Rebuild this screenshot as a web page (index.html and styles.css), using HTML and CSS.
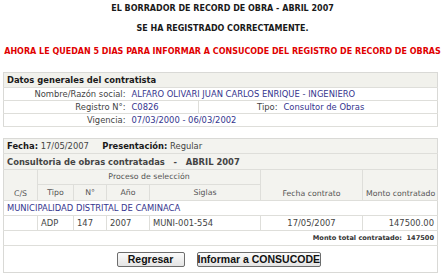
FILE: index.html
```html
<!DOCTYPE html>
<html lang="es">
<head>
<meta charset="utf-8">
<title>Record de obra</title>
<link rel="stylesheet" href="styles.css">
</head>
<body>
<div class="page">
  <p class="ttl">EL BORRADOR DE RECORD DE OBRA - ABRIL 2007</p>
  <p class="ttl t2">SE HA REGISTRADO CORRECTAMENTE.</p>
  <p class="alert">AHORA LE QUEDAN 5 DIAS PARA INFORMAR A CONSUCODE DEL REGISTRO DE RECORD DE OBRAS</p>

  <table class="box datos">
    <colgroup><col class="c-lbl"><col class="c-val"><col class="c-lbl2"><col></colgroup>
    <tr class="hdrow"><td colspan="4" class="hd">Datos generales del contratista</td></tr>
    <tr><td class="lbl">Nombre/Razón social:</td><td colspan="3" class="val">ALFARO OLIVARI JUAN CARLOS ENRIQUE - INGENIERO</td></tr>
    <tr><td class="lbl">Registro N°:</td><td class="val">C0826</td><td class="lbl sep">Tipo:</td><td class="val">Consultor de Obras</td></tr>
    <tr><td class="lbl">Vigencia:</td><td colspan="3" class="val">07/03/2000 - 06/03/2002</td></tr>
  </table>

  <table class="box obras">
    <colgroup>
      <col class="w-cs"><col class="w-tipo"><col class="w-num"><col class="w-anio"><col class="w-sig"><col class="w-fec"><col>
    </colgroup>
    <tr class="meta m1"><td colspan="7"><b>Fecha:</b> 17/05/2007&nbsp;&nbsp;&nbsp;&nbsp; <b>Presentación:</b> Regular</td></tr>
    <tr class="meta m2"><td colspan="7" class="hd">Consultoria de obras contratadas&nbsp;&nbsp; -&nbsp;&nbsp; ABRIL 2007</td></tr>
    <tr class="th1">
      <th rowspan="2" class="bot">C/S</th>
      <th colspan="4" class="proc">Proceso de selección</th>
      <th rowspan="2" class="bot">Fecha contrato</th>
      <th rowspan="2" class="bot">Monto contratado</th>
    </tr>
    <tr class="th2"><th>Tipo</th><th>N°</th><th>Año</th><th>Siglas</th></tr>
    <tr class="ent"><td colspan="7">MUNICIPALIDAD DISTRITAL DE CAMINACA</td></tr>
    <tr class="data">
      <td></td><td>ADP</td><td>147</td><td>2007</td><td>MUNI-001-554</td><td class="ctr">17/05/2007</td><td class="rgt">147500.00</td>
    </tr>
    <tr class="total"><td colspan="7">Monto total contratado:&nbsp; 147500</td></tr>
    <tr class="actions">
      <td colspan="7">
        <div class="btns">
          <button type="button" class="btn b-reg">Regresar</button>
          <button type="button" class="btn b-inf">Informar a CONSUCODE</button>
        </div>
      </td>
    </tr>
  </table>
</div>
</body>
</html>
```

FILE: styles.css
```css
html, body {
  margin: 0;
  padding: 0;
  background: #ffffff;
}

body {
  font-family: "DejaVu Sans", Verdana, sans-serif;
  font-size: 8.4px;
  color: #444444;
}

.page {
  width: 445px;
  padding-top: 3px;
}

.ttl {
  margin: 0;
  text-align: center;
  font-weight: bold;
  font-size: 8px;
  line-height: 12px;
  color: #1a1a1a;
}

.t2 {
  margin-top: 8px;
}

.alert {
  margin: 11px 0 0 0;
  text-align: center;
  font-weight: bold;
  font-size: 8px;
  line-height: 12px;
  color: #e00000;
  white-space: nowrap;
}

.box {
  margin-left: 3px;
  width: 435px;
  border-collapse: collapse;
  border: 1px solid #d9d9d6;
  table-layout: fixed;
}

.box td, .box th {
  padding: 0 3px;
  line-height: 12px;
  white-space: nowrap;
  border-bottom: 1px solid #dededa;
}

.datos {
  margin-top: 14px;
}

.c-lbl { width: 125px; }
.c-val { width: 70px; }
.c-lbl2 { width: 82px; }

.hd {
  font-weight: bold;
  color: #1a1a1a;
  background: #f1f1ec;
}

.datos .hdrow td {
  height: 14px;
}

.lbl {
  text-align: right;
  color: #444444;
}

.sep {
  border-left: 1px solid #dededa;
}

.val {
  color: #34348e;
  padding-left: 2px;
}

.obras {
  margin-top: 11px;
}

.w-cs { width: 34px; }
.w-tipo { width: 36px; }
.w-num { width: 33px; }
.w-anio { width: 43px; }
.w-sig { width: 111px; }
.w-fec { width: 102px; }

.meta td {
  background: #f3f3ef;
  color: #444444;
}

.m1 td { height: 14px; }
.m2 td { height: 15px; }

.meta b {
  color: #1a1a1a;
}

.th1 th, .th2 th {
  background: #f3f3ef;
  font-weight: normal;
  font-size: 7.8px;
  color: #555555;
  text-align: center;
  border-left: 1px solid #dededa;
}

.th1 th:first-child {
  border-left: none;
}

.th1 .proc {
  height: 14px;
}

.th2 th {
  height: 15px;
}

.bot {
  vertical-align: bottom;
  padding-bottom: 1px;
}

.ent td {
  color: #34348e;
  height: 14px;
}

.data td {
  height: 14px;
  color: #444444;
  border-left: 1px solid #dededa;
}

.data td:first-child {
  border-left: none;
}

.ctr { text-align: center; }
.rgt { text-align: right; }

.total td {
  text-align: right;
  font-weight: bold;
  font-size: 6.6px;
  color: #333333;
  height: 14px;
}

.actions td {
  height: 26px;
  border-bottom: none;
}

.btns {
  display: flex;
  justify-content: center;
  gap: 12px;
  padding-right: 4px;
}

.btn {
  font-family: "Liberation Sans", Arial, sans-serif;
  font-weight: bold;
  font-size: 10.5px;
  color: #111111;
  height: 15px;
  padding: 0;
  line-height: 13px;
  border: 1px solid #6d6d6d;
  border-radius: 2px;
  background: linear-gradient(#fbfbfb, #e4e4e4);
}

.b-reg { width: 68px; }
.b-inf { width: 124px; }
```
